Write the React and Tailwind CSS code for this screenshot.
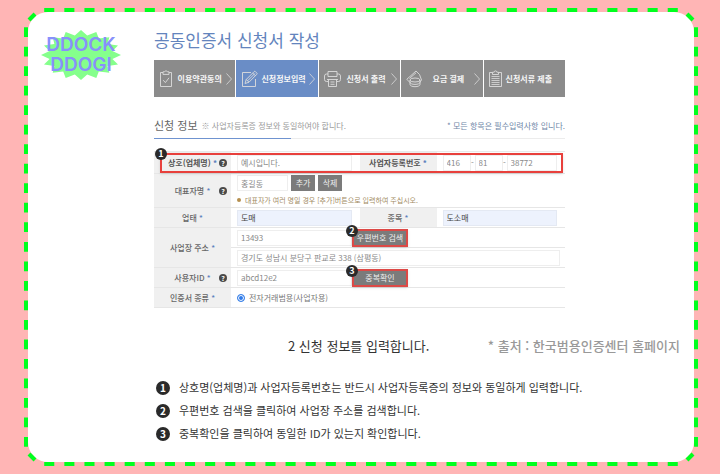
import clsx from 'clsx';

const GREEN = '#00ff1e';

// 16-pointed burst, twice as many vertices
const burst = Array.from({ length: 32 }, (_, i) => {
  const r = i % 2 ? 0.8 : 1;
  const a = (i * Math.PI) / 16;
  return `${(40 + 40 * r * Math.sin(a)).toFixed(1)},${(25 - 25 * r * Math.cos(a)).toFixed(1)}`;
}).join(' ');

function DashedFrame() {
  // pathLength makes every side start and end on a full dash
  const side = { stroke: GREEN, strokeWidth: 4, strokeDasharray: '10 10' };
  return (
    <svg className="absolute inset-0 w-full h-full overflow-visible pointer-events-none" fill="none" aria-hidden="true">
      <line x1="3%" x2="97%" y1="2" y2="2" pathLength="630" {...side} />
      <svg y="-2" width="100%" height="100%" overflow="visible">
        <line x1="3%" x2="97%" y1="100%" y2="100%" pathLength="630" {...side} />
      </svg>
      <line x1="2" x2="2" y1="4.2%" y2="95.8%" pathLength="430" {...side} />
      <svg x="-2" width="100%" height="100%" overflow="visible">
        <line x1="100%" x2="100%" y1="4.2%" y2="95.8%" pathLength="430" {...side} />
      </svg>
      <g stroke={GREEN} strokeWidth="4">
        <path d="M5 12L11 6" />
        <svg x="100%" overflow="visible"><path d="M-11 6L-5 12" /></svg>
        <svg y="100%" overflow="visible"><path d="M5 -12L11 -6" /></svg>
        <svg x="100%" y="100%" overflow="visible"><path d="M-11 -6L-5 -12" /></svg>
      </g>
    </svg>
  );
}

function Logo() {
  return (
    <div className="relative w-20 h-[50px]">
      <svg viewBox="0 0 80 50" className="absolute inset-0 w-full h-full" aria-hidden="true">
        <polygon points={burst} fill="#85ff8c" />
      </svg>
      <div className="relative pt-[5px] text-center font-['Inter',sans-serif] font-semibold text-[19px] leading-5 text-[#8890fb]">
        DDOCK<br />DDOGI
      </div>
    </div>
  );
}

const icons = {
  agree: (
    <svg width="14" height="18" viewBox="0 0 14 18" fill="none" stroke="currentColor" strokeWidth=".9">
      <path d="M4 2.5H1.5v14h11v-14H10M4 1.8h1.6a1.5 1.5 0 0 1 2.8 0H10v2.6H4z" />
      <path d="M4.2 10.2l2.2 2.4 3.6-4.8" />
    </svg>
  ),
  write: (
    <svg width="17" height="18" viewBox="0 0 17 18" fill="none" stroke="currentColor" strokeWidth=".9">
      <path d="M10 2.5H1.5v14h13V9" />
      <path d="M4 13.5l1.2-4L13 1.7a1 1 0 0 1 1.5 0l1.2 1.2a1 1 0 0 1 0 1.5L8 12.2zM5.2 9.5L8 12.2M6.6 10.8l7.4-7.4M11.6 3l2.8 2.8" />
    </svg>
  ),
  print: (
    <svg width="17" height="18" viewBox="0 0 17 18" fill="none" stroke="currentColor" strokeWidth=".9">
      <path d="M4 6.500V1.500h9v5M4 11.500H2.500a2 2 0 0 1-2-2V6a2 2 0 0 1 2-2H4M13 4h1.500a2 2 0 0 1 2 2v3.500a2 2 0 0 1-2 2H13M4 6.500h9" />
      <path d="M3 9.500h11M4.500 9.500v7h8v-7M6.500 12h4M6.500 14.300h4" />
    </svg>
  ),
  pay: (
    <svg width="17" height="18" viewBox="0 0 17 18" fill="none" stroke="currentColor" strokeWidth=".9">
      <path d="M4 12.5L.8 9.3 10 1l3.5 3.5 2 5.5-1.500 2M3.500 8.500L10 2.800" />
      <ellipse cx="9" cy="10" rx="5" ry="2" />
      <path d="M4 10v4.500c0 1.200 2.200 2.200 5 2.200s5-1 5-2.200V10M4 12.300c0 1.200 2.200 2.100 5 2.100s5-.9 5-2.100" />
    </svg>
  ),
  submit: (
    <svg width="13" height="18" viewBox="0 0 13 18" fill="none" stroke="currentColor" strokeWidth=".9">
      <path d="M3.500 2.500h-3v14h12v-14h-3M3.500 2.200h1.700a1.300 1.300 0 0 1 2.600 0h1.700v2.300h-6z" />
      <path d="M2.500 6.500h8M2.500 8.500h8M2.500 10.500h8M2.500 12.500h8M2.500 14.500h8" strokeWidth=".8" />
    </svg>
  ),
};

const steps = [
  { icon: 'agree', label: '이용약관동의' },
  { icon: 'write', label: '신청정보입력', active: true },
  { icon: 'print', label: '신청서 출력' },
  { icon: 'pay', label: '요금 결제' },
  { icon: 'submit', label: '신청서류 제출' },
];

function Steps() {
  return (
    <ol className="grid grid-cols-5 gap-px">
      {steps.map((s, i) => (
        <li
          key={s.label}
          aria-current={s.active ? 'step' : undefined}
          className={clsx('flex items-center h-[37px] pl-[5px] pr-[3px] text-[#dcdcdc]', s.active ? 'bg-[#6a8dc6]' : 'bg-[#8b8b8b]')}
        >
          <span className="shrink-0">{icons[s.icon]}</span>
          <span className="flex-1 text-center text-[8px] font-bold text-[#f6f6f6] whitespace-nowrap">{s.label}</span>
          <svg width="6" height="12" viewBox="0 0 6 12" className="shrink-0" fill="none" stroke="currentColor" strokeWidth=".8">
            {i < steps.length - 1 && <path d="M.5 .5L5.500 6L.5 11.500" />}
          </svg>
        </li>
      ))}
    </ol>
  );
}

function Badge({ n, className }) {
  return (
    <span className={clsx('flex items-center justify-center rounded-full text-white font-bold', className)}>{n}</span>
  );
}

function Label({ children, htmlFor, help, strong, rowSpan }) {
  return (
    <th scope="row" rowSpan={rowSpan} className={clsx('relative bg-[#f0f0f0] text-center text-[8px]', strong ? 'font-bold text-[#555]' : 'font-medium text-[#666]')}>
      <label htmlFor={htmlFor}>{children} <span className="text-[#5b7fbd]">*</span></label>
      {help && (
        <Badge n="?" className="absolute right-1 top-1/2 -translate-y-1/2 size-2 text-[7px] bg-[#4a4a4a]" />
      )}
    </th>
  );
}

function Field({ className, filled, ...rest }) {
  return (
    <input
      type="text"
      className={clsx(
        'block h-4 px-[3px] border text-[8px] leading-3',
        filled ? 'bg-[#edf2fd] border-[#e4e9f3] text-[#444]' : 'bg-white border-[#eee] text-[#888]',
        className
      )}
      {...rest}
    />
  );
}

function GrayButton({ children, marked }) {
  return (
    <button
      type="button"
      className={clsx('bg-[#7b7b7b] text-[8px] leading-3 text-[#eee] whitespace-nowrap', marked ? 'w-14 h-[18px] border-2 border-[#dd4946] shadow-sm' : 'w-6 h-4')}
    >
      {children}
    </button>
  );
}

function ApplicationForm() {
  return (
    <form className="relative mt-3">
      <table className="w-full table-fixed border-collapse text-[8px] leading-3 border-t border-[#eaeaea] [&_td]:py-0 [&_td]:pl-[6px] [&_tr]:border-b [&_tr]:border-[#e6e6e6]">
        <colgroup>
          <col className="w-[77px]" />
          <col />
          <col className="w-[77px]" />
          <col />
        </colgroup>
        <tbody>
          <tr className="h-[22px]">
            <Label htmlFor="company" help strong>상호(업체명)</Label>
            <td className="pr-2"><Field id="company" className="w-full" defaultValue="예시입니다." /></td>
            <Label htmlFor="biz1" strong>사업자등록번호</Label>
            <td className="pr-2">
              <div className="flex items-center text-[#888]">
                <Field id="biz1" className="w-7" defaultValue="416" />
                <span className="w-1 text-center">-</span>
                <Field aria-label="사업자등록번호 2" className="w-7" defaultValue="81" />
                <span className="w-1 text-center">-</span>
                <Field aria-label="사업자등록번호 3" className="flex-1 min-w-0" defaultValue="38772" />
              </div>
            </td>
          </tr>
          <tr className="h-[34px]">
            <Label htmlFor="owner" help>대표자명</Label>
            <td colSpan={3}>
              <div className="flex gap-[3px]">
                <Field id="owner" className="w-[51px]" defaultValue="홍길동" />
                <GrayButton>추가</GrayButton>
                <GrayButton>삭제</GrayButton>
              </div>
              <p className="mt-[3px] flex items-center gap-1 text-[7px] text-[#a18a5f]">
                <span className="size-1 rounded-full bg-[#b58f4f]" />
                대표자가 여러 명일 경우 [추가]버튼으로 입력하여 주십시오.
              </p>
            </td>
          </tr>
          <tr className="h-5">
            <Label htmlFor="business">업태</Label>
            <td className="pr-2"><Field id="business" filled className="w-full" defaultValue="도매" /></td>
            <Label htmlFor="item">종목</Label>
            <td className="pr-2"><Field id="item" filled className="w-full" defaultValue="도소매" /></td>
          </tr>
          <tr className="h-5">
            <Label htmlFor="zip" rowSpan={2}>사업장 주소</Label>
            <td colSpan={3}>
              <div className="flex items-center">
                <Field id="zip" className="w-[115px]" defaultValue="13493" />
                <span className="relative flex">
                  <GrayButton marked>우편번호 검색</GrayButton>
                  <Badge n="2" className="absolute -left-[6px] -top-1 size-3 text-[9px] bg-[#2a2a2a]" />
                </span>
              </div>
            </td>
          </tr>
          <tr className="h-5">
            <td colSpan={3} className="pr-[5px]">
              <Field aria-label="상세 주소" className="w-full" defaultValue="경기도 성남시 분당구 판교로 338 (삼평동)" />
            </td>
          </tr>
          <tr className="h-5">
            <Label htmlFor="userid" help>사용자ID</Label>
            <td colSpan={3}>
              <div className="flex items-center">
                <Field id="userid" className="w-[115px]" defaultValue="abcd12e2" />
                <span className="relative flex">
                  <GrayButton marked>중복확인</GrayButton>
                  <Badge n="3" className="absolute -left-[6px] -top-1 size-3 text-[9px] bg-[#2a2a2a]" />
                </span>
              </div>
            </td>
          </tr>
          <tr className="h-5">
            <Label htmlFor="cert">인증서 종류</Label>
            <td colSpan={3}>
              <label className="flex items-center gap-1 text-[#777]">
                <input
                  id="cert"
                  type="radio"
                  defaultChecked
                  className="appearance-none size-2 rounded-full border border-[#3b82e8] bg-[#2f7bea] shadow-[inset_0_0_0_1px_white]"
                />
                전자거래범용(사업자용)
              </label>
            </td>
          </tr>
        </tbody>
      </table>

      {/* highlight around the first row */}
      <div className="absolute left-[6px] right-[2px] top-[2px] h-5 border-2 border-[#e8403c] shadow-sm pointer-events-none" />
      <Badge n="1" className="absolute left-px -top-[3px] size-3 text-[9px] bg-[#2a2a2a]" />
    </form>
  );
}

const notes = [
  '상호명(업체명)과 사업자등록번호는 반드시 사업자등록증의 정보와 동일하게 입력합니다.',
  '우편번호 검색을 클릭하여 사업장 주소를 검색합니다.',
  '중복확인을 클릭하여 동일한 ID가 있는지 확인합니다.',
];

export default function App() {
  return (
    <div lang="ko" className="min-h-screen flex bg-[#ffb5b5] py-2 pl-6 pr-[22px] font-['Noto_Sans_CJK_KR',sans-serif]">
      <main className="relative flex-1 p-1">
        <div className="h-full rounded-[20px] bg-white">
          <div className="flex">
            <div className="w-[126px] shrink-0 pt-[18px] pl-[13px]"><Logo /></div>
            <div className="flex-1 pt-4 mr-[129px]">
              <h1 className="text-[17px] leading-6 text-[#6384bd]">공동인증서 신청서 작성</h1>
              <div className="mt-2"><Steps /></div>
              <div className="mt-4 flex items-center h-[25px] text-[8px]">
                <h2 className="text-[11px] text-[#666]">신청 정보</h2>
                <p className="ml-1 text-[#999]">※ 사업자등록증 정보와 동일하여야 합니다.</p>
                <p className="ml-auto text-[#6f87a8]">* 모든 항목은 필수입력사항 입니다.</p>
              </div>
              <div className="h-px bg-[#ececec]"><div className="w-1/3 h-px bg-[#6f93d0]" /></div>
              <ApplicationForm />
            </div>
          </div>

          <div className="mt-7 flex justify-between pl-[260px] pr-[14px] text-[13px] leading-5">
            <p className="text-[#333]">2 신청 정보를 입력합니다.</p>
            <p className="font-medium text-[#999]">* 출처 : 한국범용인증센터 홈페이지</p>
          </div>
          <ol className="mt-5 pl-[128px] text-[11px] text-[#333]">
            {notes.map((n, i) => (
              <li key={n} className="flex items-center gap-[9px] h-[23px] whitespace-nowrap">
                <Badge n={i + 1} className="size-[14px] text-[10px] bg-[#2a2a2a]" />
                {n}
              </li>
            ))}
          </ol>
        </div>
        <DashedFrame />
      </main>
    </div>
  );
}
